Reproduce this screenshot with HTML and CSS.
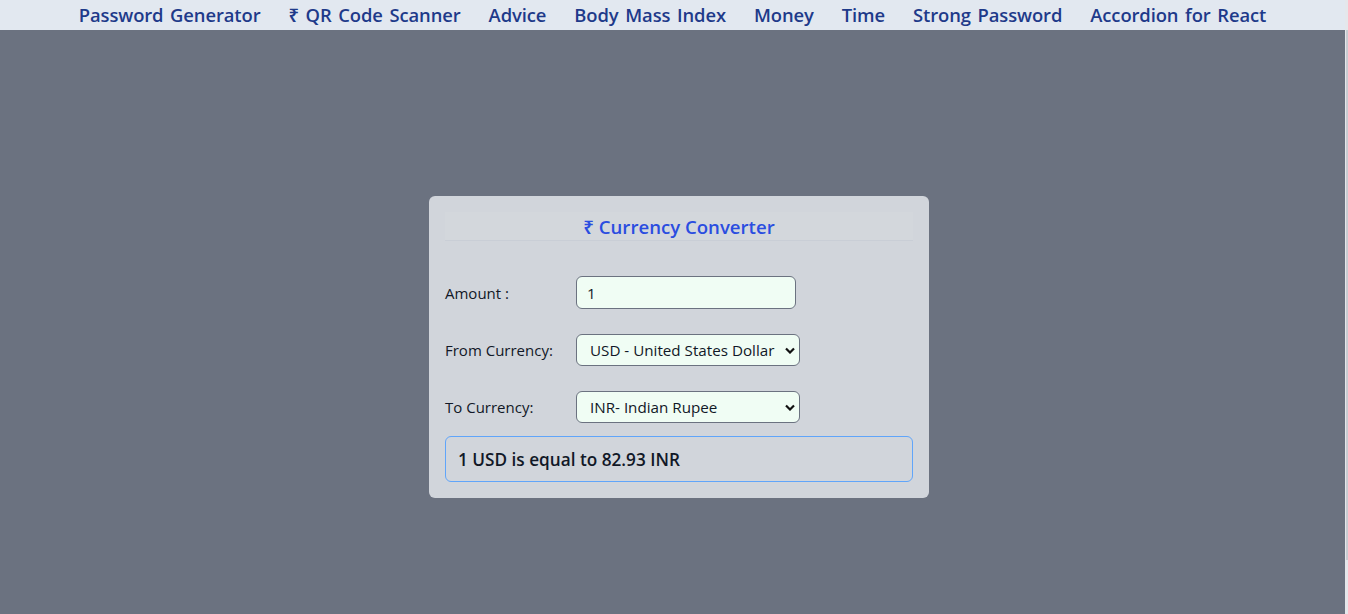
FILE: index.html
```html
<!DOCTYPE html>
<html lang="en">
<head>
<meta charset="utf-8">
<title>Currency Converter</title>
<link rel="stylesheet" href="styles.css">
</head>
<body>
<div class="page">
  <nav class="nav">
    <a class="nav-link" href="#">Password Generator</a>
    <a class="nav-link" href="#">₹ QR Code Scanner</a>
    <a class="nav-link" href="#">Advice</a>
    <a class="nav-link" href="#">Body Mass Index</a>
    <a class="nav-link" href="#">Money</a>
    <a class="nav-link" href="#">Time</a>
    <a class="nav-link" href="#">Strong Password</a>
    <a class="nav-link" href="#">Accordion for React</a>
  </nav>
  <main class="main">
    <section class="card">
      <h1 class="title">₹ Currency Converter</h1>
      <div class="row row-first">
        <label class="label" for="amount">Amount :</label>
        <input class="field input" id="amount" type="text" value="1">
      </div>
      <div class="row">
        <label class="label" for="from">From Currency:</label>
        <select class="field select" id="from">
          <option>USD - United States Dollar</option>
        </select>
      </div>
      <div class="row">
        <label class="label" for="to">To Currency:</label>
        <select class="field select" id="to">
          <option>INR- Indian Rupee</option>
        </select>
      </div>
      <div class="result">1 USD is equal to 82.93 INR</div>
    </section>
  </main>
</div>
<div class="scrollbar"><div class="thumb"></div></div>
</body>
</html>
```

FILE: styles.css
```css
* { box-sizing: border-box; }
html, body { margin: 0; padding: 0; }
body {
  width: 1348px;
  height: 614px;
  overflow: hidden;
  font-family: "Open Sans", "Noto Sans", sans-serif;
  background: #6b7280;
  display: flex;
}
.page {
  width: 1345px;
  height: 614px;
  display: flex;
  flex-direction: column;
}
.nav {
  height: 30px;
  background: #e2e8f0;
  display: flex;
  justify-content: center;
  align-items: center;
  gap: 28px;
  padding-bottom: 1px;
}
.nav-link {
  color: #1e3a8a;
  text-decoration: none;
  font-size: 18.4px;
  font-weight: 600;
  word-spacing: 2px;
  letter-spacing: -0.1px;
  white-space: nowrap;
}
.main {
  flex: 1;
  display: flex;
  justify-content: center;
  padding-top: 166px;
  padding-left: 13px;
}
.card {
  width: 500px;
  height: 302px;
  background: #d1d5db;
  border-radius: 6px;
  padding: 16px 16px 0 16px;
}
.title {
  margin: 0;
  height: 29px;
  text-align: center;
  font-size: 18.6px;
  font-weight: 600;
  color: #2a4de0;
  line-height: 29px;
  border-bottom: 1px solid #c9ced6;
  background: rgba(255,255,255,0.05);
}
.row {
  display: flex;
  align-items: center;
  margin-top: 25px;
}
.row-first { margin-top: 35px; }
.label {
  width: 131px;
  font-size: 15px;
  color: #111827;
}
.field {
  height: 33px;
  background: #f0fdf4;
  border: 1px solid #6b7280;
  border-radius: 6px;
  font-family: inherit;
  font-size: 15.2px;
  color: #111827;
}
.input {
  width: 220px;
  padding: 0 10px;
}
.select {
  width: 224px;
  height: 32px;
  padding: 0 10px 0 13px;
  appearance: none;
  -webkit-appearance: none;
  background-image: url("data:image/svg+xml,%3Csvg xmlns='http://www.w3.org/2000/svg' width='10' height='7' viewBox='0 0 10 7'%3E%3Cpath d='M1 1.5l4 4 4-4' fill='none' stroke='%23111' stroke-width='2.2'/%3E%3C/svg%3E");
  background-repeat: no-repeat;
  background-position: right 4px center;
}
.result {
  margin-top: 13px;
  height: 46px;
  border: 1px solid #60a5fa;
  border-radius: 6px;
  padding: 0 12px;
  display: flex;
  align-items: center;
  font-size: 17.2px;
  font-weight: 600;
  color: #111827;
}
.scrollbar {
  width: 3px;
  height: 614px;
  background: #e5e7eb;
  display: flex;
  justify-content: flex-end;
}
.thumb {
  width: 2px;
  margin-top: 30px;
  height: 530px;
  background: #c8ccd2;
}
```
